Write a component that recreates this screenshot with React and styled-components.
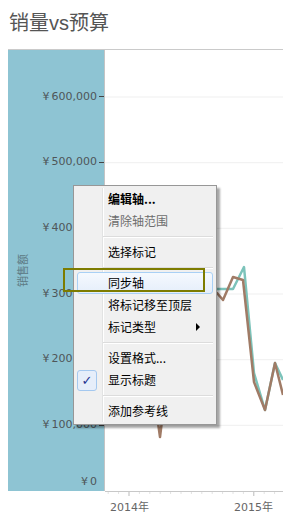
import styled, { createGlobalStyle } from "styled-components";

const GlobalStyle = createGlobalStyle`
  html, body {
    margin: 0;
    padding: 0;
    background: #fff;
  }
  body {
    width: 283px;
    height: 531px;
    overflow: hidden;
    font-family: "Noto Sans CJK SC", sans-serif;
  }
`;

const Page = styled.div`
  position: relative;
  width: 283px;
  height: 531px;
  overflow: hidden;
`;

const Title = styled.h1`
  margin: 0;
  height: 49px;
  padding: 10px 0 0 9px;
  box-sizing: border-box;
  font: 400 20px/26px "Liberation Sans", "Noto Sans CJK SC", sans-serif;
  color: #555;
`;

const Chart = styled.div`
  margin-left: 8px;
  border-top: 1px solid #cacaca;
  display: flex;
  align-items: flex-start;
`;

const AxisPanel = styled.div`
  flex: none;
  width: 96px;
  height: 441px;
  background: #8ec4d3;
  border-right: 1px solid #c4c4c4;
  display: flex;
`;

const AxisTitle = styled.div`
  width: 27px;
  display: flex;
  align-items: center;
  justify-content: center;
`;

const AxisTitleText = styled.span`
  writing-mode: vertical-rl;
  text-orientation: sideways;
  transform: rotate(180deg);
  font: 11px/12px "Noto Sans CJK SC", sans-serif;
  color: #5d7a83;
`;

const Labels = styled.div`
  flex: 1;
  display: flex;
  flex-direction: column;
  padding-top: 14px;
`;

const TickRow = styled.div`
  height: 65.67px;
  display: flex;
  align-items: center;
  justify-content: flex-end;
`;

const ZeroRow = styled.div`
  flex: 1;
  display: flex;
  align-items: flex-end;
  justify-content: flex-end;
  padding: 0 7px 2px 0;
`;

const AxisLabel = styled.span`
  font: 11px/14px "DejaVu Sans", sans-serif;
  color: #4f5659;
  white-space: nowrap;
`;

const Currency = styled.span`
  margin-right: 2px;
`;

const TickMark = styled.span`
  width: 5px;
  height: 1px;
  margin-left: 2px;
  background: #444;
`;

const PlotColumn = styled.div`
  flex: none;
  width: 178px;
  display: flex;
  flex-direction: column;
`;

const Plot = styled.div`
  height: 441px;
  border-bottom: 1px solid #c8c8c8;
  svg {
    display: block;
    overflow: visible;
  }
`;

const XAxis = styled.div`
  display: grid;
  grid-template-columns: 124px 1fr;
  padding: 9px 0 0 5px;
  font: 11px/13px "DejaVu Sans", "Noto Sans CJK SC", sans-serif;
  color: #666;
`;

const Menu = styled.div`
  position: absolute;
  left: 73px;
  top: 185px;
  width: 144px;
  box-sizing: border-box;
  padding: 2px 0;
  background: #f0f0f0;
  border: 1px solid #979797;
  box-shadow: 3px 3px 2px rgba(0, 0, 0, 0.35);

  &::before {
    content: "";
    position: absolute;
    left: 28px;
    top: 2px;
    bottom: 2px;
    width: 1px;
    background: #e2e3e3;
    border-right: 1px solid #fff;
  }
`;

const Item = styled.div`
  position: relative;
  height: 22px;
  margin: 0 3px;
  box-sizing: border-box;
  display: flex;
  align-items: center;
  border: 1px solid ${(p) => (p.$active ? "#a9d0f5" : "transparent")};
  border-radius: 3px;
  background: ${(p) =>
    p.$active ? "linear-gradient(to bottom, #f5f9fe, #e5eefa)" : "transparent"};
  font: ${(p) => (p.$bold ? 700 : 400)} 12px/16px "Noto Sans CJK SC", sans-serif;
  color: ${(p) => (p.$disabled ? "#6d6d6d" : "#000")};
`;

const IconCell = styled.span`
  width: 20px;
  height: 21px;
  margin-left: -1px;
  box-sizing: border-box;
  display: flex;
  align-items: center;
  justify-content: center;
  border: 1px solid ${(p) => (p.$checked ? "#a4c8ef" : "transparent")};
  border-radius: 3px;
  background: ${(p) => (p.$checked ? "#e6eefa" : "transparent")};
  color: #1f3591;
  font: 700 13px/1 "DejaVu Sans", sans-serif;
`;

const Label = styled.span`
  margin-left: 11px;
`;

const Arrow = styled.span`
  margin-left: auto;
  margin-right: 12px;
  width: 0;
  height: 0;
  border-left: 4px solid #000;
  border-top: 4px solid transparent;
  border-bottom: 4px solid transparent;
`;

const Separator = styled.div`
  position: relative;
  height: 9px;
  margin: 0 3px 0 29px;
  &::after {
    content: "";
    position: absolute;
    left: 0;
    right: 0;
    top: 4px;
    height: 1px;
    background: #dcdcdc;
    border-bottom: 1px solid #fff;
  }
`;

const Annotation = styled.div`
  position: absolute;
  left: 63px;
  top: 268px;
  width: 142px;
  height: 24px;
  box-sizing: border-box;
  border: 2px solid #7d7c00;
`;

const ticks = ["600,000", "500,000", "400,000", "300,000", "200,000", "100,000"];
const grid = [47, 112.7, 178.3, 244, 309.7, 375.3];

const teal = [
  [5, 280], [20, 250], [35, 290], [55, 322], [70, 280], [85, 250], [100, 245],
  [112, 239], [128, 239], [139, 217], [149, 323], [160, 360], [170, 313], [178, 330],
];
const brown = [
  [5, 270], [20, 260], [35, 300], [47, 330], [55, 387], [62, 330], [75, 290],
  [90, 260], [103, 250], [112, 243], [118, 250], [128, 227], [138, 230],
  [149, 332], [160, 360], [170, 313], [178, 345],
];
const pts = (list) => list.map((p) => p.join(",")).join(" ");

const menu = [
  { label: "编辑轴...", bold: true },
  { label: "清除轴范围", disabled: true },
  "sep",
  { label: "选择标记" },
  "sep",
  { label: "同步轴", active: true },
  { label: "将标记移至顶层" },
  { label: "标记类型", sub: true },
  "sep",
  { label: "设置格式..." },
  { label: "显示标题", checked: true },
  "sep",
  { label: "添加参考线" },
];

export default function App() {
  return (
    <Page>
      <GlobalStyle />
      <Title>销量vs预算</Title>
      <Chart>
        <AxisPanel>
          <AxisTitle>
            <AxisTitleText>销售额</AxisTitleText>
          </AxisTitle>
          <Labels>
            {ticks.map((t) => (
              <TickRow key={t}>
                <AxisLabel>
                  <Currency>¥</Currency>
                  {t}
                </AxisLabel>
                <TickMark />
              </TickRow>
            ))}
            <ZeroRow>
              <AxisLabel>
                <Currency>¥</Currency>0
              </AxisLabel>
            </ZeroRow>
          </Labels>
        </AxisPanel>
        <PlotColumn>
          <Plot>
            <svg width="178" height="441">
              {grid.map((y) => (
                <line key={y} x1="0" x2="178" y1={y} y2={y} stroke="#efefef" strokeWidth="1" />
              ))}
              {Array.from({ length: 17 }, (_, i) => {
                const x = 24 + (i - 2) * 10.4;
                const major = i === 2 || i === 14;
                return x > 0 ? (
                  <line key={i} x1={x} x2={x} y1="442" y2={major ? 446 : 444} stroke={major ? "#bbb" : "#e2e2e2"} />
                ) : null;
              })}
              <polyline points={pts(teal)} fill="none" stroke="#7cc3ba" strokeWidth="2.5" strokeLinejoin="round" />
              <polyline points={pts(brown)} fill="none" stroke="#a07b66" strokeWidth="2.5" strokeLinejoin="round" />
            </svg>
          </Plot>
          <XAxis>
            <span>2014年</span>
            <span>2015年</span>
          </XAxis>
        </PlotColumn>
      </Chart>

      <Menu>
        {menu.map((m, i) =>
          m === "sep" ? (
            <Separator key={i} />
          ) : (
            <Item key={i} $bold={m.bold} $disabled={m.disabled} $active={m.active}>
              <IconCell $checked={m.checked}>{m.checked ? "✓" : ""}</IconCell>
              <Label>{m.label}</Label>
              {m.sub && <Arrow />}
            </Item>
          )
        )}
      </Menu>
      <Annotation />
    </Page>
  );
}
